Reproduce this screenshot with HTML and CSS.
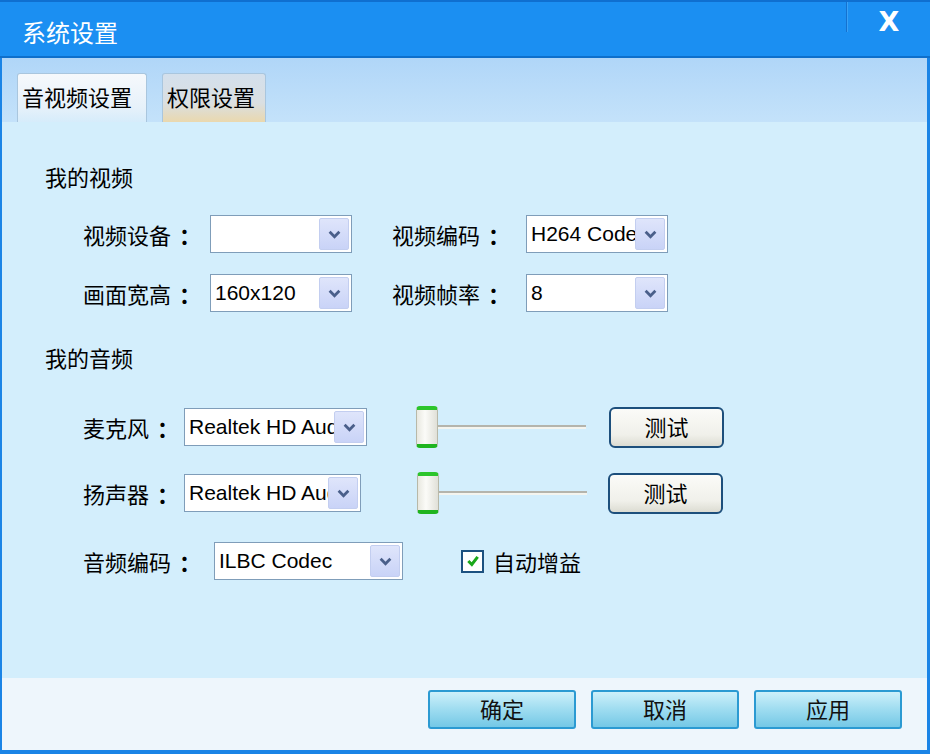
FILE: index.html
```html
<!DOCTYPE html>
<html lang="zh">
<head>
<meta charset="utf-8">
<title>系统设置</title>
<link rel="stylesheet" href="styles.css">
</head>
<body>
<div class="window">
  <div class="titlebar">
    <span class="title">系统设置</span>
    <span class="close-sep"></span>
    <span class="close">X</span>
  </div>
  <div class="tabstrip">
    <div class="tab active">音视频设置</div>
    <div class="tab other">权限设置</div>
  </div>
  <div class="content">
    <div class="section-title">我的视频</div>
    <div class="vrow first">
      <span class="label w127">视频设备<span class="colon">：</span></span>
      <div class="select w142"><span class="val"></span><span class="arrow"><svg viewBox="0 0 12 8" width="13" height="9"><path d="M1.5 1.5 L6 6 L10.5 1.5" fill="none" stroke="#4a5f8a" stroke-width="2.6"/></svg></span></div>
      <span class="label w134 ml40">视频编码<span class="colon">：</span></span>
      <div class="select w142"><span class="val">H264 Codec</span><span class="arrow"><svg viewBox="0 0 12 8" width="13" height="9"><path d="M1.5 1.5 L6 6 L10.5 1.5" fill="none" stroke="#4a5f8a" stroke-width="2.6"/></svg></span></div>
    </div>
    <div class="vrow">
      <span class="label w127">画面宽高<span class="colon">：</span></span>
      <div class="select w142"><span class="val">160x120</span><span class="arrow"><svg viewBox="0 0 12 8" width="13" height="9"><path d="M1.5 1.5 L6 6 L10.5 1.5" fill="none" stroke="#4a5f8a" stroke-width="2.6"/></svg></span></div>
      <span class="label w134 ml40">视频帧率<span class="colon">：</span></span>
      <div class="select w142"><span class="val">8</span><span class="arrow"><svg viewBox="0 0 12 8" width="13" height="9"><path d="M1.5 1.5 L6 6 L10.5 1.5" fill="none" stroke="#4a5f8a" stroke-width="2.6"/></svg></span></div>
    </div>
    <div class="section-title audio">我的音频</div>
    <div class="arow first">
      <span class="label w101">麦克风<span class="colon">：</span></span>
      <div class="select w183"><span class="val">Realtek HD Audio</span><span class="arrow"><svg viewBox="0 0 12 8" width="13" height="9"><path d="M1.5 1.5 L6 6 L10.5 1.5" fill="none" stroke="#4a5f8a" stroke-width="2.6"/></svg></span></div>
      <div class="slider ml49"><span class="thumb"></span><span class="track"></span></div>
      <button class="test ml23">测试</button>
    </div>
    <div class="arow second">
      <span class="label w101">扬声器<span class="colon">：</span></span>
      <div class="select w177"><span class="val">Realtek HD Audio</span><span class="arrow"><svg viewBox="0 0 12 8" width="13" height="9"><path d="M1.5 1.5 L6 6 L10.5 1.5" fill="none" stroke="#4a5f8a" stroke-width="2.6"/></svg></span></div>
      <div class="slider ml56"><span class="thumb"></span><span class="track"></span></div>
      <button class="test ml21">测试</button>
    </div>
    <div class="arow third">
      <span class="label w131">音频编码<span class="colon">：</span></span>
      <div class="select w189"><span class="val">ILBC Codec</span><span class="arrow"><svg viewBox="0 0 12 8" width="13" height="9"><path d="M1.5 1.5 L6 6 L10.5 1.5" fill="none" stroke="#4a5f8a" stroke-width="2.6"/></svg></span></div>
      <label class="check ml58"><span class="box"><svg viewBox="0 0 12 12" width="14" height="14"><path d="M2 6 L5 9 L10 2.5" fill="none" stroke="#1aa81a" stroke-width="2.6"/></svg></span>自动增益</label>
    </div>
  </div>
  <div class="footer">
    <button class="fbtn">确定</button>
    <button class="fbtn">取消</button>
    <button class="fbtn">应用</button>
  </div>
</div>
</body>
</html>
```
FILE: styles.css
```css
* { box-sizing: border-box; }
html, body { margin: 0; padding: 0; }
body {
  width: 930px;
  height: 754px;
  overflow: hidden;
  font-family: "Noto Sans CJK SC", "Liberation Sans", sans-serif;
  color: #000;
  background: #ffffff;
}
.window {
  width: 930px;
  height: 754px;
  display: flex;
  flex-direction: column;
  border-left: 2px solid #1a84e6;
  border-right: 3px solid #1a84e6;
  border-bottom: 4px solid #1a84e6;
}
.titlebar {
  height: 58px;
  flex: none;
  display: flex;
  align-items: flex-start;
  background: #1b8ff2;
  border-top: 2px solid #0f6fd0;
  border-bottom: 2px solid #0e6fcb;
  margin: 0 -3px 0 -2px;
}
.title {
  color: #fff;
  font-size: 24px;
  line-height: 28px;
  margin: 16px 0 0 22px;
  flex: 1;
}
.close-sep {
  width: 2px;
  height: 30px;
  background: #1571cf;
  border-right: 1px solid #3aa2f6;
}
.close {
  color: #fff;
  font-family: "DejaVu Sans", sans-serif;
  font-weight: bold;
  font-size: 27px;
  line-height: 28px;
  width: 82px;
  text-align: center;
  margin-top: 6px;
}
.tabstrip {
  height: 64px;
  flex: none;
  display: flex;
  align-items: flex-end;
  gap: 15px;
  padding-left: 15px;
  background: linear-gradient(#b0d6f8, #c4e2fa);
}
.tab {
  height: 49px;
  font-size: 22px;
  line-height: 44px;
  padding: 0 4px;
  border: 1px solid #a9c6de;
  border-bottom: none;
  border-radius: 3px 3px 0 0;
}
.tab.active {
  width: 130px;
  background: linear-gradient(#f6f9fc, #e6f1fa 70%, #d6ecfb);
}
.tab.other {
  width: 104px;
  background: linear-gradient(#d4e0ec 0%, #dadfe2 60%, #ead8ae 100%);
}
.content {
  flex: 1;
  background: #d3eefc;
  padding: 42px 0 0 43px;
}
.section-title {
  font-size: 22px;
  line-height: 24px;
}
.section-title.audio { margin-top: 33px; }
.label {
  font-size: 22px;
  line-height: 24px;
  flex: none;
  white-space: nowrap;
}
.colon {
  font-weight: bold;
  margin-left: 8px;
}
.vrow, .arow {
  display: flex;
  align-items: center;
  padding-left: 38px;
}
.vrow { height: 38px; margin-top: 21px; }
.vrow.first { margin-top: 27px; }
.arow { height: 44px; }
.arow.first { margin-top: 36px; }
.arow.second { margin-top: 22px; }
.arow.third { margin-top: 27px; height: 38px; }
.w101 { width: 101px; }
.w127 { width: 127px; }
.w131 { width: 131px; }
.w134 { width: 134px; }
.w142 { width: 142px; }
.w177 { width: 177px; }
.w183 { width: 183px; }
.w189 { width: 189px; }
.ml21 { margin-left: 21px; }
.ml23 { margin-left: 23px; }
.ml40 { margin-left: 40px; }
.ml49 { margin-left: 49px; }
.ml56 { margin-left: 56px; }
.ml58 { margin-left: 58px; }
.select {
  flex: none;
  height: 38px;
  display: flex;
  align-items: center;
  background: #fff;
  border: 1px solid #7f9db9;
  padding: 2px 2px 2px 4px;
}
.select .val {
  flex: 1;
  min-width: 0;
  overflow: hidden;
  white-space: nowrap;
  font-family: "Liberation Sans", "DejaVu Sans", sans-serif;
  font-size: 21px;
  line-height: 32px;
}
.select .arrow {
  flex: none;
  width: 30px;
  height: 32px;
  background: linear-gradient(#dfe5fb, #c9d3f7);
  border: 1px solid #c3cef0;
  display: flex;
  align-items: center;
  justify-content: center;
  border-radius: 2px;
}
.slider {
  flex: none;
  display: flex;
  align-items: center;
  width: 170px;
  height: 44px;
}
.thumb {
  width: 22px;
  height: 42px;
  border-radius: 4px;
  background: linear-gradient(90deg, #e8e8e0, #fbfbf8 40%, #e0e0d8);
  border: 1px solid #b8b8a8;
  border-top: 4px solid #2cc52c;
  border-bottom: 4px solid #1fb41f;
}
.track {
  width: 148px;
  height: 4px;
  background: #b4b4ac;
  border-bottom: 2px solid #f4f4ee;
}
.test {
  flex: none;
  width: 115px;
  height: 41px;
  border: 2px solid #1d4f7c;
  border-radius: 6px;
  background: linear-gradient(#fbfbf8, #f0f0ea 70%, #dcdcd2);
  font-family: "Noto Sans CJK SC", sans-serif;
  font-size: 22px;
  line-height: 24px;
  color: #000;
  padding: 0 0 3px 0;
}
.check {
  display: flex;
  align-items: center;
  font-size: 22px;
  line-height: 24px;
}
.check .box {
  width: 23px;
  height: 23px;
  border: 2px solid #1c5180;
  background: #fff;
  display: flex;
  align-items: center;
  justify-content: center;
  margin-right: 9px;
}
.footer {
  height: 72px;
  flex: none;
  background: #eef6fc;
  display: flex;
  justify-content: flex-end;
  align-items: flex-start;
  gap: 15px;
  padding: 12px 25px 0 0;
}
.fbtn {
  width: 148px;
  height: 39px;
  border: 2px solid #2b9ad2;
  border-radius: 3px;
  background: linear-gradient(#cdf0fa, #9edcf0 50%, #74c8e6);
  font-family: "Noto Sans CJK SC", sans-serif;
  font-size: 22px;
  line-height: 24px;
  color: #111;
  padding: 0 0 4px 0;
}
```
